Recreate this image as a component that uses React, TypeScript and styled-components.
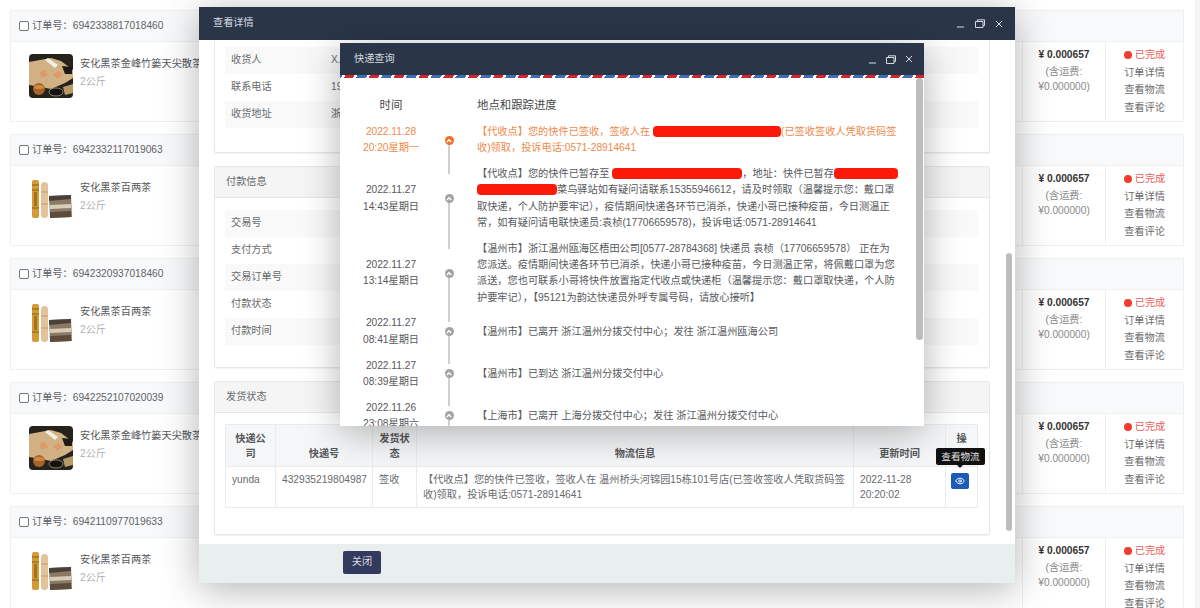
import React from "react";
import styled, { createGlobalStyle } from "styled-components";
import { Eye } from "lucide-react";

const Global = createGlobalStyle`
  html, body { margin: 0; padding: 0; width: 1200px; height: 608px; overflow: hidden; background: #fff; }
  body { font-family: "Liberation Sans", "Noto Sans CJK SC", sans-serif; font-size: 10.2px; line-height: 1.6; color: #676a6c; }
  * { box-sizing: border-box; }
`;

const Page = styled.div`
  position: relative;
  display: flex;
  width: 1200px;
  height: 608px;
  overflow: hidden;
`;
const OrderList = styled.div`
  flex: 1;
  display: flex;
  flex-direction: column;
  gap: 12px;
  padding: 10px 11px 0 10px;
`;
const PageTrack = styled.div`
  width: 5px;
  background: #f5f5f5;
`;
const OrderCard = styled.section`
  flex: none;
  height: 112px;
  border: 1px solid #f0f0f0;
  display: flex;
  flex-direction: column;
`;
const OrderHead = styled.header`
  height: 31px;
  flex: none;
  display: flex;
  align-items: center;
  padding-left: 8px;
  background: #f8f9fa;
  border-bottom: 1px solid #f0f0f0;
  color: #5f6265;
`;
const Check = styled.span`
  width: 10px;
  height: 10px;
  border: 1px solid #777;
  border-radius: 2px;
  margin-right: 3px;
  background: #fff;
`;
const OrderRow = styled.div`
  flex: 1;
  display: flex;
`;
const Product = styled.div`
  flex: 1;
  display: flex;
  padding: 12px 0 0 18px;
  gap: 7px;
`;
const Thumb = styled.div`
  width: 44px;
  height: 44px;
  flex: none;
  border-radius: 4px;
  overflow: hidden;
`;
const ProductTitle = styled.div`
  color: #55585b;
  margin-top: 1px;
  line-height: 18px;
`;
const ProductSpec = styled.div`
  color: #b0b0b0;
  line-height: 18px;
`;
const PriceCol = styled.div`
  width: 83px;
  flex: none;
  border-left: 1px solid #f0f0f0;
  text-align: center;
  padding-top: 4px;
  line-height: 15px;
  color: #8a8a8a;
`;
const Price = styled.div`
  font-weight: bold;
  color: #333;
  line-height: 17.5px;
`;
const StatusCol = styled.div`
  width: 78px;
  flex: none;
  border-left: 1px solid #f0f0f0;
  text-align: center;
  padding-top: 4px;
  line-height: 17.5px;
  color: #6b6b6b;
`;
const Done = styled.div`
  color: #e8605c;
  display: flex;
  align-items: center;
  justify-content: center;
  gap: 3px;
`;
const Dot = styled.span`
  width: 8px;
  height: 8px;
  border-radius: 50%;
  background: #f03b2e;
`;

const Window = styled.div<{ $x: number; $y: number; $w: number; $h: number }>`
  position: absolute;
  left: ${(p) => p.$x}px;
  top: ${(p) => p.$y}px;
  width: ${(p) => p.$w}px;
  height: ${(p) => p.$h}px;
  display: flex;
  flex-direction: column;
  background: #fff;
  box-shadow: 0 6px 36px rgba(0, 0, 0, 0.3);
`;
const TitleBar = styled.div<{ $h: number }>`
  flex: none;
  height: ${(p) => p.$h}px;
  background: #2a3648;
  color: #d5dae0;
  display: flex;
  align-items: center;
  justify-content: space-between;
  font-size: 10.2px;
`;
const TitleText = styled.span<{ $pad: number }>`
  padding-left: ${(p) => p.$pad}px;
`;
const Controls = styled.div<{ $pad: number; $gap: number }>`
  display: flex;
  align-items: center;
  gap: ${(p) => p.$gap}px;
  padding-right: ${(p) => p.$pad}px;
  color: #d5dae0;
`;
const Airmail = styled.div`
  flex: none;
  height: 3px;
  background: repeating-linear-gradient(
    -60deg,
    #d8232f 0 8px,
    #fff 8px 10.5px,
    #3f6db5 10.5px 19px,
    #fff 19px 21.5px
  );
`;
const ScrollThumb = styled.div<{ $r: number; $t: number; $h: number; $w: number }>`
  position: absolute;
  right: ${(p) => p.$r}px;
  top: ${(p) => p.$t}px;
  height: ${(p) => p.$h}px;
  width: ${(p) => p.$w}px;
  border-radius: 3px;
  background: #bdbdbd;
`;
const DetailBody = styled.div`
  flex: 1;
  overflow: hidden;
  display: flex;
  flex-direction: column;
  gap: 13px;
  padding: 0 25px 0 15px;
`;
const Panel = styled.section`
  flex: none;
  border: 1px solid #e7e7e7;
  border-radius: 2px;
  box-shadow: 0 1px 1px rgba(0, 0, 0, 0.05);
`;
const FirstPanel = styled(Panel)`
  border-top: 0;
  padding: 7px 11px 24px 10px;
`;
const PanelHead = styled.div`
  height: 31px;
  background: #f5f5f5;
  border-bottom: 1px solid #e7e7e7;
  display: flex;
  align-items: center;
  padding-left: 11px;
`;
const PanelBody = styled.div<{ $pt: number; $pb: number }>`
  padding: ${(p) => p.$pt}px 11px ${(p) => p.$pb}px 10px;
`;
const InfoRow = styled.div<{ $alt: boolean }>`
  height: 27px;
  display: flex;
  align-items: center;
  padding-left: 6px;
  background: ${(p) => (p.$alt ? "#f9f9f9" : "#fff")};
`;
const InfoLabel = styled.span`
  width: 100px;
  flex: none;
`;
const Ship = styled.table`
  width: 752px;
  table-layout: fixed;
  border-collapse: collapse;
  font-size: 10.2px;
  line-height: 15px;
`;
const Th = styled.th<{ $w: number }>`
  width: ${(p) => p.$w}px;
  height: 42px;
  padding: 5px;
  border: 1px solid #e9ecee;
  background: #f5f6f7;
  color: #55585b;
  font-weight: bold;
  text-align: center;
  vertical-align: bottom;
`;
const Td = styled.td`
  height: 41px;
  padding: 5px 6px;
  border: 1px solid #e9ecee;
  vertical-align: top;
`;
const ActionTd = styled(Td)`
  padding: 6px 0 0 5px;
`;
const Nowrap = styled.span`
  white-space: nowrap;
`;
const EyeButton = styled.span`
  display: flex;
  align-items: center;
  justify-content: center;
  width: 18px;
  height: 16px;
  border-radius: 2px;
  background: #1c5bb8;
  color: #fff;
`;
const Tip = styled.div`
  position: absolute;
  left: 737px;
  top: 441px;
  width: 49px;
  height: 17px;
  border-radius: 2px;
  background: #111;
  color: #e4e4e4;
  font-size: 9.6px;
  display: flex;
  align-items: center;
  justify-content: center;
  &::after {
    content: "";
    position: absolute;
    left: 21px;
    top: 17px;
    border: 3px solid transparent;
    border-top-color: #111;
  }
`;
const DetailFoot = styled.div`
  flex: none;
  height: 39px;
  background: #e9eeee;
  padding: 7px 0 0 144px;
`;
const CloseButton = styled.button`
  width: 38px;
  height: 23px;
  border: 0;
  border-radius: 2px;
  background: #333a5e;
  color: #d8dae4;
  font: inherit;
  padding: 0;
`;

const TrackBody = styled.div`
  flex: 1;
  overflow: hidden;
  padding-top: 18px;
`;
const TrackHead = styled.div`
  display: grid;
  grid-template-columns: 102px 35px 1fr;
  font-size: 11.4px;
  color: #44474a;
  line-height: 18px;
  margin-bottom: 10px;
`;
const HeadTime = styled.span`
  text-align: center;
  grid-column: 1;
`;
const HeadPlace = styled.span`
  grid-column: 3;
`;
const TrackRow = styled.div<{ $done?: boolean }>`
  display: grid;
  grid-template-columns: 102px 35px 1fr;
  align-items: center;
  margin-bottom: 9.5px;
  line-height: 16.3px;
  color: ${(p) => (p.$done ? "#ee8a4c" : "#55585b")};
`;
const TimeCell = styled.div`
  text-align: center;
`;
const Rail = styled.div`
  position: relative;
  align-self: stretch;
`;
const RailLine = styled.span<{ $len: number }>`
  position: absolute;
  left: 6.25px;
  top: 50%;
  width: 1.5px;
  height: ${(p) => p.$len}px;
  background: #cfcfcf;
`;
const Node = styled.span<{ $done?: boolean }>`
  position: absolute;
  left: 2.5px;
  top: 50%;
  margin-top: -4.5px;
  width: 9px;
  height: 9px;
  border-radius: 50%;
  background: ${(p) => (p.$done ? "#f0702a" : "#a3a3a3")};
  display: flex;
  align-items: center;
  justify-content: center;
`;
const PlaceCell = styled.div`
  white-space: nowrap;
`;
const Redact = styled.span<{ $w: number }>`
  display: inline-block;
  width: ${(p) => p.$w}px;
  height: 11px;
  vertical-align: -2px;
  border-radius: 4px;
  background: #fb1a0a;
`;

const Minimize = () => (
  <svg width="9" height="9" viewBox="0 0 9 9" fill="none" stroke="currentColor" strokeWidth="1">
    <path d="M1 8h7" />
  </svg>
);
const Restore = () => (
  <svg width="10" height="9" viewBox="0 0 10 9" fill="none" stroke="currentColor" strokeWidth="1">
    <path d="M.5 2.5h7.5v6H.5z" />
    <path d="M2.5 2.5V.8h7v5.7H8" />
  </svg>
);
const Close = () => (
  <svg width="8" height="8" viewBox="0 0 8 8" fill="none" stroke="currentColor" strokeWidth="1">
    <path d="M1 1l6 6M7 1L1 7" />
  </svg>
);
const Chevron = () => (
  <svg width="6" height="5" viewBox="0 0 6 5" fill="none" stroke="#fff" strokeWidth="1.5">
    <path d="M.8 4L3 1.8 5.2 4" />
  </svg>
);

const TeaBox = () => (
  <svg width="44" height="44" viewBox="0 0 44 44">
    <rect width="44" height="44" fill="#26221c" />
    <path d="M0 8l22-4 10 3 12 9v8l-8 5-14 6-10-2-12-2z" fill="#d2b184" />
    <path d="M16 6l3-2 10 7-3 3z" fill="#f2efe8" />
    <path d="M10 18l6-2 3 5-6 3zM24 20l6-3 4 4-6 4z" fill="#dd9a6a" />
    <path d="M33 12l10 1v7l-7 0z" fill="#1e1a15" />
    <circle cx="10" cy="35" r="6" fill="#a5652a" />
    <ellipse cx="10" cy="33" rx="5" ry="2" fill="#d08b3e" />
    <ellipse cx="27" cy="38" rx="7" ry="4" fill="#14110e" stroke="#8a8478" />
    <path d="M34 33l10-3v9l-8 2z" fill="#b99a68" />
  </svg>
);
const TeaTubes = () => (
  <svg width="44" height="44" viewBox="0 0 44 44">
    <rect width="44" height="44" fill="#fff" />
    <rect x="3" y="2" width="7" height="38" rx="2" fill="#d39a35" />
    <path d="M3 7h7M3 12h7M3 30h7" stroke="#8e5a18" strokeWidth="1.2" />
    <rect x="5" y="14" width="3" height="14" fill="#a86f1e" />
    <rect x="12" y="4" width="7" height="36" rx="3.5" fill="#e3c39c" />
    <path d="M12 14h7M12 26h7" stroke="#c49a68" />
    <path d="M20 18l22-1 1 22-22 1z" fill="#8a7a66" />
    <path d="M20 18l22-1v4l-22 2z" fill="#4a4038" />
    <path d="M21 27l21-1v4l-21 1z" fill="#d8cdb8" />
    <path d="M21 34l21-1v6l-21 1z" fill="#5e4c3a" />
  </svg>
);

type Order = { no: string; title: string; box: boolean };
const orders: Order[] = [
  { no: "6942338817018460", title: "安化黑茶金峰竹篓天尖散茶", box: true },
  { no: "6942332117019063", title: "安化黑茶百两茶", box: false },
  { no: "6942320937018460", title: "安化黑茶百两茶", box: false },
  { no: "6942252107020039", title: "安化黑茶金峰竹篓天尖散茶", box: true },
  { no: "6942110977019633", title: "安化黑茶百两茶", box: false },
];

const App: React.FC = () => (
  <Page>
    <Global />
    <OrderList>
      {orders.map((o) => (
        <OrderCard key={o.no}>
          <OrderHead>
            <Check />
            订单号：{o.no}
          </OrderHead>
          <OrderRow>
            <Product>
              <Thumb>{o.box ? <TeaBox /> : <TeaTubes />}</Thumb>
              <div>
                <ProductTitle>{o.title}</ProductTitle>
                <ProductSpec>2公斤</ProductSpec>
              </div>
            </Product>
            <PriceCol>
              <Price>¥ 0.000657</Price>
              <div>(含运费:</div>
              <div>¥0.000000)</div>
            </PriceCol>
            <StatusCol>
              <Done>
                <Dot />
                已完成
              </Done>
              <div>订单详情</div>
              <div>查看物流</div>
              <div>查看评论</div>
            </StatusCol>
          </OrderRow>
        </OrderCard>
      ))}
    </OrderList>
    <PageTrack />

    <Window $x={199} $y={7} $w={816} $h={576}>
      <TitleBar $h={33}>
        <TitleText $pad={14}>查看详情</TitleText>
        <Controls $pad={12} $gap={10}>
          <Minimize />
          <Restore />
          <Close />
        </Controls>
      </TitleBar>
      <DetailBody>
        <FirstPanel>
          <InfoRow $alt>
            <InfoLabel>收货人</InfoLabel>X.
          </InfoRow>
          <InfoRow $alt={false}>
            <InfoLabel>联系电话</InfoLabel>19
          </InfoRow>
          <InfoRow $alt>
            <InfoLabel>收货地址</InfoLabel>浙
          </InfoRow>
        </FirstPanel>
        <Panel>
          <PanelHead>付款信息</PanelHead>
          <PanelBody $pt={12} $pb={22}>
            {["交易号", "支付方式", "交易订单号", "付款状态", "付款时间"].map((l, i) => (
              <InfoRow key={l} $alt={i % 2 === 0}>
                <InfoLabel>{l}</InfoLabel>
              </InfoRow>
            ))}
          </PanelBody>
        </Panel>
        <Panel>
          <PanelHead>发货状态</PanelHead>
          <PanelBody $pt={11} $pb={26}>
            <Ship>
              <thead>
                <tr>
                  <Th $w={50}>快递公司</Th>
                  <Th $w={97}>快递号</Th>
                  <Th $w={44}>发货状态</Th>
                  <Th $w={437}>物流信息</Th>
                  <Th $w={92}>更新时间</Th>
                  <Th $w={32}>
                    操
                    <br />作
                  </Th>
                </tr>
              </thead>
              <tbody>
                <tr>
                  <Td>yunda</Td>
                  <Td>432935219804987</Td>
                  <Td>签收</Td>
                  <Td>
                    <Nowrap>
                      【代收点】您的快件已签收，签收人在 温州桥头河锦园15栋101号店(已签收签收人凭取货码签
                      <br />
                      收)领取，投诉电话:0571-28914641
                    </Nowrap>
                  </Td>
                  <Td>2022-11-28 20:20:02</Td>
                  <ActionTd>
                    <EyeButton>
                      <Eye size={10} strokeWidth={2.2} />
                    </EyeButton>
                  </ActionTd>
                </tr>
              </tbody>
            </Ship>
          </PanelBody>
        </Panel>
      </DetailBody>
      <DetailFoot>
        <CloseButton>关闭</CloseButton>
      </DetailFoot>
      <ScrollThumb $r={3} $t={246} $h={278} $w={6} />
      <Tip>查看物流</Tip>
    </Window>

    <Window $x={340} $y={43} $w={584} $h={383}>
      <TitleBar $h={32}>
        <TitleText $pad={14}>快递查询</TitleText>
        <Controls $pad={11} $gap={9}>
          <Minimize />
          <Restore />
          <Close />
        </Controls>
      </TitleBar>
      <Airmail />
      <TrackBody>
        <TrackHead>
          <HeadTime>时间</HeadTime>
          <HeadPlace>地点和跟踪进度</HeadPlace>
        </TrackHead>
        <TrackRow $done>
          <TimeCell>
            2022.11.28
            <br />
            20:20星期一
          </TimeCell>
          <Rail>
            <RailLine $len={34} />
            <Node $done>
              <Chevron />
            </Node>
          </Rail>
          <PlaceCell>
            【代收点】您的快件已签收，签收人在 <Redact $w={128} />
            (已签收签收人凭取货码签
            <br />
            收)领取，投诉电话:0571-28914641
          </PlaceCell>
        </TrackRow>
        <TrackRow>
          <TimeCell>
            2022.11.27
            <br />
            14:43星期日
          </TimeCell>
          <Rail>
            <RailLine $len={50} />
            <Node>
              <Chevron />
            </Node>
          </Rail>
          <PlaceCell>
            【代收点】您的快件已暂存至 <Redact $w={130} />
            ，地址：快件已暂存
            <Redact $w={64} />
            <br />
            <Redact $w={80} />
            菜鸟驿站如有疑问请联系15355946612，请及时领取（温馨提示您：戴口罩
            <br />
            取快递，个人防护要牢记），疫情期间快递各环节已消杀，快递小哥已接种疫苗，今日测温正
            <br />
            常，如有疑问请电联快递员:袁桢(17706659578)，投诉电话:0571-28914641
          </PlaceCell>
        </TrackRow>
        <TrackRow>
          <TimeCell>
            2022.11.27
            <br />
            13:14星期日
          </TimeCell>
          <Rail>
            <RailLine $len={49} />
            <Node>
              <Chevron />
            </Node>
          </Rail>
          <PlaceCell>
            【温州市】浙江温州瓯海区梧田公司[0577-28784368] 快递员 袁桢（17706659578） 正在为
            <br />
            您派送。疫情期间快递各环节已消杀，快递小哥已接种疫苗，今日测温正常，将佩戴口罩为您
            <br />
            派送，您也可联系小哥将快件放置指定代收点或快递柜（温馨提示您：戴口罩取快递，个人防
            <br />
            护要牢记），【95121为韵达快递员外呼专属号码，请放心接听】
          </PlaceCell>
        </TrackRow>
        <TrackRow>
          <TimeCell>
            2022.11.27
            <br />
            08:41星期日
          </TimeCell>
          <Rail>
            <RailLine $len={32} />
            <Node>
              <Chevron />
            </Node>
          </Rail>
          <PlaceCell>【温州市】已离开 浙江温州分拨交付中心；发往 浙江温州瓯海公司</PlaceCell>
        </TrackRow>
        <TrackRow>
          <TimeCell>
            2022.11.27
            <br />
            08:39星期日
          </TimeCell>
          <Rail>
            <RailLine $len={32} />
            <Node>
              <Chevron />
            </Node>
          </Rail>
          <PlaceCell>【温州市】已到达 浙江温州分拨交付中心</PlaceCell>
        </TrackRow>
        <TrackRow>
          <TimeCell>
            2022.11.26
            <br />
            23:08星期六
          </TimeCell>
          <Rail>
            <RailLine $len={32} />
            <Node>
              <Chevron />
            </Node>
          </Rail>
          <PlaceCell>【上海市】已离开 上海分拨交付中心；发往 浙江温州分拨交付中心</PlaceCell>
        </TrackRow>
      </TrackBody>
      <ScrollThumb $r={1} $t={35} $h={262} $w={7} />
    </Window>
  </Page>
);

export default App;
